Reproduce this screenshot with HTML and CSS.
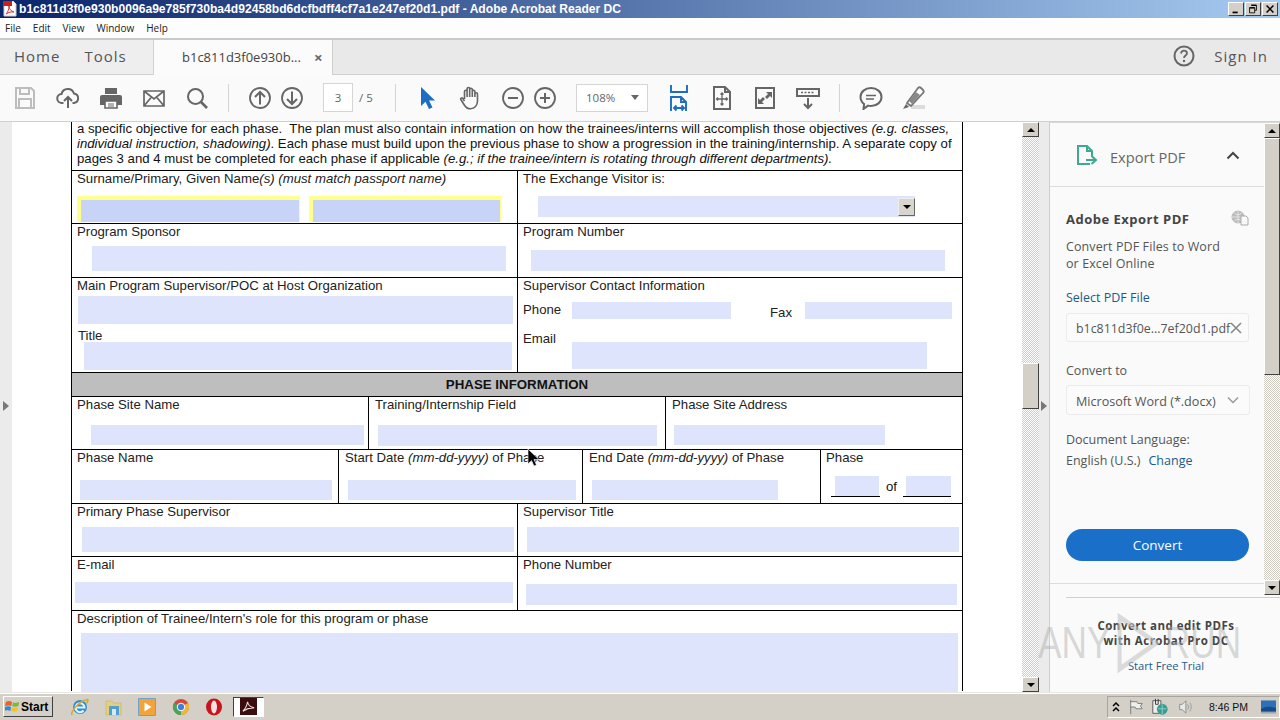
FILE: index.html
```html
<!DOCTYPE html>
<html lang="en">
<head>
<meta charset="utf-8">
<title>Adobe Acrobat Reader DC</title>
<link rel="stylesheet" href="styles.css">
</head>
<body>
<div class="app">
  <header class="titlebar">
    <svg class="title-icon" viewBox="0 0 14 16"><path d="M1 0h9l3 3v12H1z" fill="#fff" stroke="#c9c9c9"/><path d="M0 0h9v5H0z" fill="#c8201c"/><path d="M3 13c2-2 3-5 3-8 0 3 2 5 5 6-3-.3-5 0-8 2z" fill="none" stroke="#d2352e"/></svg>
    <span class="title-text">b1c811d3f0e930b0096a9e785f730ba4d92458bd6dcfbdff4cf7a1e247ef20d1.pdf - Adobe Acrobat Reader DC</span>
    <div class="win-buttons">
      <span class="win-btn"><svg viewBox="0 0 16 14"><path d="M4 10h6v2H4z" fill="#000"/></svg></span>
      <span class="win-btn"><svg viewBox="0 0 16 14"><path d="M6 2.5h6v6h-2M4 5.500h6v6H4z" fill="none" stroke="#000"/><path d="M6 2h6v1.500H6zM4 5h6v1.500H4z"/></svg></span>
      <span class="win-btn"><svg viewBox="0 0 16 14"><path d="M4 3l8 8M12 3l-8 8" stroke="#000" stroke-width="1.800"/></svg></span>
    </div>
  </header>
  <nav class="menubar"><span>File</span><span>Edit</span><span>View</span><span>Window</span><span>Help</span></nav>
  <div class="tabbar">
    <div class="home-tabs"><span>Home</span><span>Tools</span></div>
    <div class="doc-tab"><span class="doc-tab-name">b1c811d3f0e930b...</span><span class="doc-tab-x">×</span></div>
    <div class="tab-right">
      <svg class="help" viewBox="0 0 22 22"><circle cx="11" cy="11" r="9.500" fill="none" stroke="#666" stroke-width="2"/><path d="M8 8.500c.3-2 1.500-2.800 3-2.800 1.800 0 3 1.100 3 2.600 0 2.200-3 2.300-3 4.700" fill="none" stroke="#666" stroke-width="1.800"/><circle cx="11" cy="16" r="1.200" fill="#666"/></svg>
      <span class="signin">Sign In</span>
    </div>
  </div>
  <div class="toolbar">
    <svg class="ic" viewBox="0 0 24 24"><path d="M3 2h15l3 3v17H3z M7 2v6h9V2 M6 22v-9h12v9" fill="none" stroke="#bdbdbd" stroke-width="2"/></svg>
    <svg class="ic" viewBox="0 0 24 24"><path d="M7.500 17H6a4.500 4.500 0 0 1-.5-9A6.500 6.500 0 0 1 18 7.500 4.800 4.800 0 0 1 18 17h-1.500M12 22V11M8 15l4-4 4 4" fill="none" stroke="#666" stroke-width="2"/></svg>
    <svg class="ic" viewBox="0 0 24 24"><path d="M6 2h12v6H6z" fill="#666"/><path d="M3 9h18a2 2 0 0 1 2 2v8h-5v-3H6v3H1v-8a2 2 0 0 1 2-2z" fill="#666"/><path d="M6 15h12v7H6z" fill="#fff" stroke="#666" stroke-width="1.600"/><path d="M9 18h6M9 20h6" stroke="#666"/></svg>
    <svg class="ic" viewBox="0 0 24 24"><path d="M2 5h20v15H2zM2 5l10 8 10-8M2 20l7.500-9M22 20l-7.500-9" fill="none" stroke="#666" stroke-width="1.700"/></svg>
    <svg class="ic" viewBox="0 0 24 24"><circle cx="10.500" cy="10.500" r="7.500" fill="none" stroke="#666" stroke-width="2"/><path d="M16 16l6 6" stroke="#666" stroke-width="2.600"/></svg>
    <span class="tb-sep"></span>
    <div class="tb-pair">
      <svg class="ic" viewBox="0 0 24 24"><circle cx="12" cy="12" r="10" fill="none" stroke="#666" stroke-width="1.800"/><path d="M12 18.500V6M7 11l5-5 5 5" fill="none" stroke="#666" stroke-width="2"/></svg>
      <svg class="ic" viewBox="0 0 24 24"><circle cx="12" cy="12" r="10" fill="none" stroke="#666" stroke-width="1.800"/><path d="M12 5.500V18M7 13l5 5 5-5" fill="none" stroke="#666" stroke-width="2"/></svg>
    </div>
    <div class="pager"><span class="page-box">3</span><span class="page-of">/ 5</span></div>
    <span class="tb-sep"></span>
    <svg class="ic" viewBox="0 0 24 24"><path d="M6 1v19l4.500-4.300L14 23l3.500-1.600-3.400-7H20z" fill="#1b6ec2"/></svg>
    <svg class="ic" viewBox="0 0 24 24"><path d="M6.500 13V5.500a1.300 1.300 0 0 1 2.600 0V11M9.100 11V2.800a1.300 1.300 0 0 1 2.600 0V11M11.700 11V3.500a1.300 1.300 0 0 1 2.600 0V11M14.300 11V5.500a1.300 1.300 0 0 1 2.600 0V11M16.900 11V8a1.300 1.300 0 0 1 2.600 0v7c0 4.500-2.900 7.800-7 7.800-3 0-4.800-1.500-6.200-3.800l-3.500-5.500c-.6-1.100.9-2.100 1.900-1.200L6.500 15" fill="none" stroke="#666" stroke-width="1.600"/></svg>
    <div class="tb-pair">
      <svg class="ic" viewBox="0 0 24 24"><circle cx="12" cy="12" r="10" fill="none" stroke="#666" stroke-width="1.800"/><path d="M7 12h10" stroke="#666" stroke-width="2"/></svg>
      <svg class="ic" viewBox="0 0 24 24"><circle cx="12" cy="12" r="10" fill="none" stroke="#666" stroke-width="1.800"/><path d="M7 12h10M12 7v10" stroke="#666" stroke-width="2"/></svg>
    </div>
    <div class="zoom-box"><span>108%</span><i class="caret"></i></div>
    <svg class="ic tall" viewBox="0 0 24 28"><path d="M4 1v7h16V1M4 27V13h10l5 5v9M14 13v5h5M7 24h10M9.500 21.500L7 24l2.500 2.500M14.500 21.500L17 24l-2.500 2.500" fill="none" stroke="#1b6ec2" stroke-width="1.900"/></svg>
    <svg class="ic" viewBox="0 0 24 24"><path d="M4 1h11l5 5v17H4zM15 1v5h5" fill="none" stroke="#666" stroke-width="2"/><path d="M12 7v12M6.500 13h11M10.500 8.500L12 7l1.500 1.500M10.500 17.500L12 19l1.500-1.500M8 11.500L6.500 13 8 14.500M16 11.500l1.500 1.500-1.500 1.500" fill="none" stroke="#666" stroke-width="1.300"/></svg>
    <svg class="ic" viewBox="0 0 24 24"><path d="M3 2h18v20H3z" fill="none" stroke="#666" stroke-width="2"/><path d="M13 6h6v6l-2-2-3 3-2-2 3-3zM11 18H5v-6l2 2 3-3 2 2-3 3z" fill="#666"/></svg>
    <svg class="ic" viewBox="0 0 24 24"><path d="M1 3h22v7H1z" fill="none" stroke="#666" stroke-width="2"/><path d="M5 6.500h14" stroke="#666" stroke-width="1.600" stroke-dasharray="2 1.500"/><path d="M12 12v10M8 18l4 4 4-4" fill="none" stroke="#666" stroke-width="2"/></svg>
    <span class="tb-sep"></span>
    <svg class="ic" viewBox="0 0 24 24"><path d="M12 2c6 0 10.500 4 10.500 9S18 20 12 20c-1 0-2-.1-3-.4L4.500 23l.6-5C2.800 16.300 1.500 14 1.500 11 1.500 6 6 2 12 2z" fill="none" stroke="#666" stroke-width="2"/><path d="M7 9.500h10M7 13h8" stroke="#666" stroke-width="1.500"/></svg>
    <svg class="ic" viewBox="0 0 24 24"><path d="M9 23h14v-4H10z" fill="#dcdcdc"/><path d="M1 23l3-5 3 3z" fill="#666"/><path d="M5 17L16 2c1-1 2-1 3 0l2 2c1 1 1 2 0 3L9 20z" fill="#fff" stroke="#777" stroke-width="1.800"/><path d="M7 15l7-9 4 3-8 9z" fill="#888"/></svg>
  </div>

  <main class="workspace">
    <div class="gutter-left"><i class="tri-right"></i></div>
    <section class="doc">
      <div class="sheet">
        <p class="intro">a specific objective for each phase.&nbsp; The plan must also contain information on how the trainees/interns will accomplish those objectives <em>(e.g. classes,</em><br><em>individual instruction, shadowing)</em>. Each phase must build upon the previous phase to show a progression in the training/internship. A separate copy of<br>pages 3 and 4 must be completed for each phase if applicable <em>(e.g.; if the trainee/intern is rotating through different departments).</em></p>

        <div class="row r1">
          <div class="cell half">
            <div class="label">Surname/Primary, Given Name<em>(s) (must match passport name)</em></div>
            <div class="name-fields"><div class="focus-field f-sur"><div class="focus-inner"></div></div><div class="focus-field f-given"><div class="focus-inner"></div></div></div>
          </div>
          <div class="cell half line">
            <div class="label">The Exchange Visitor is:</div>
            <div class="combo"><div class="combo-btn"><i class="tri-down"></i></div></div>
          </div>
        </div>

        <div class="row r2">
          <div class="cell half"><div class="label">Program Sponsor</div><div class="field f-sponsor"></div></div>
          <div class="cell half line"><div class="label">Program Number</div><div class="field f-number"></div></div>
        </div>

        <div class="row r3">
          <div class="cell half">
            <div class="label">Main Program Supervisor/POC at Host Organization</div>
            <div class="field f-main"></div>
            <div class="label title-label">Title</div>
            <div class="field f-title"></div>
          </div>
          <div class="cell half line">
            <div class="label">Supervisor Contact Information</div>
            <div class="contact c-phone">
              <span class="label contact-label">Phone</span><div class="field f-phone"></div>
              <span class="label fax-label">Fax</span><div class="field f-fax"></div>
            </div>
            <div class="contact c-email">
              <span class="label contact-label">Email</span><div class="field f-email"></div>
            </div>
          </div>
        </div>

        <div class="band">PHASE INFORMATION</div>

        <div class="row r4">
          <div class="cell c-site"><div class="label">Phase Site Name</div><div class="field f-site"></div></div>
          <div class="cell c-train line"><div class="label">Training/Internship Field</div><div class="field f-train"></div></div>
          <div class="cell c-addr line"><div class="label">Phase Site Address</div><div class="field f-addr"></div></div>
        </div>

        <div class="row r5">
          <div class="cell c-pname"><div class="label">Phase Name</div><div class="field f-pname"></div></div>
          <div class="cell c-start line"><div class="label">Start Date <em>(mm-dd-yyyy)</em> of Phase</div><div class="field f-start"></div></div>
          <div class="cell c-end line"><div class="label">End Date <em>(mm-dd-yyyy)</em> of Phase</div><div class="field f-end"></div></div>
          <div class="cell c-phase line">
            <div class="label">Phase</div>
            <div class="phase-of"><div class="u-field"><div class="field f-pa"></div></div><span class="of">of</span><div class="u-field"><div class="field f-pb"></div></div></div>
          </div>
        </div>

        <div class="row r6">
          <div class="cell half"><div class="label">Primary Phase Supervisor</div><div class="field f-primary"></div></div>
          <div class="cell half line"><div class="label">Supervisor Title</div><div class="field f-suptitle"></div></div>
        </div>

        <div class="row r7">
          <div class="cell half"><div class="label">E-mail</div><div class="field f-mail"></div></div>
          <div class="cell half line"><div class="label">Phone Number</div><div class="field f-tel"></div></div>
        </div>

        <div class="row r8">
          <div class="cell full"><div class="label">Description of Trainee/Intern's role for this program or phase</div><div class="field f-desc"></div></div>
        </div>
      </div>
      <svg class="cursor" viewBox="0 0 12 18"><path d="M1 0v15l3.500-3.500L7 17l2.500-1L7 10.500h5z" fill="#000" stroke="#fff" stroke-width=".6"/></svg>
    </section>
    <div class="vscroll doc-scroll">
      <div class="sb-btn"><i class="tri-up"></i></div>
      <div class="sb-thumb doc-thumb"></div>
      <div class="sb-track"></div>
      <div class="sb-btn"><i class="tri-down"></i></div>
    </div>
    <div class="gutter-mid"><i class="tri-right"></i></div>

    <aside class="panel">
      <div class="panel-top">
        <div class="panel-body">
          <div class="export-head">
            <svg class="export-icon" viewBox="0 0 23 22"><path d="M14 19H2V1h9l5 5v5M11 1v5h5" fill="none" stroke="#3fa893" stroke-width="2"/><path d="M10 15h9M15.500 11l4.500 4-4.500 4" fill="none" stroke="#3fa893" stroke-width="2"/></svg>
            <span class="export-title">Export PDF</span>
            <svg class="chev" viewBox="0 0 14 9"><path d="M1.500 7.500L7 2l5.500 5.500" fill="none" stroke="#444" stroke-width="2"/></svg>
          </div>
          <div class="export-body">
            <div class="ae-head"><strong>Adobe Export PDF</strong><svg class="globe" viewBox="0 0 18 16"><circle cx="7" cy="7" r="6.500" fill="#bbb"/><path d="M7 .5v13M1 7h12M3 2.500c2 3 6 3 8 0M3 11.500c2-3 6-3 8 0" stroke="#eee" fill="none" stroke-width=".8"/><path d="M10 6h5l2 2v7h-7z" fill="#fafafa" stroke="#aaa"/></svg></div>
            <p class="pt desc">Convert PDF Files to Word<br>or Excel Online</p>
            <p class="pt link sel">Select PDF File</p>
            <div class="input-box"><span>b1c811d3f0e...7ef20d1.pdf</span><svg class="clear" viewBox="0 0 12 12"><path d="M1 1l10 10M11 1L1 11" stroke="#888" stroke-width="1.600"/></svg></div>
            <p class="pt conv">Convert to</p>
            <div class="input-box select-box"><span>Microsoft Word (*.docx)</span><svg class="sel-chev" viewBox="0 0 12 8"><path d="M1 1.500l5 5 5-5" fill="none" stroke="#999" stroke-width="1.500"/></svg></div>
            <p class="pt lang">Document Language:</p>
            <p class="pt lang2">English (U.S.)<a class="link change">Change</a></p>
            <div class="convert-btn">Convert</div>
          </div>
        </div>
        <div class="vscroll panel-scroll">
          <div class="sb-btn"><i class="tri-up"></i></div>
          <div class="sb-thumb panel-thumb"></div>
          <div class="sb-track"></div>
          <div class="sb-btn"><i class="tri-down"></i></div>
        </div>
      </div>
      <div class="promo">
        <p class="promo-title">Convert and edit PDFs<br>with Acrobat Pro DC</p>
        <p class="promo-link">Start Free Trial</p>
      </div>
      <div class="watermark"><span>ANY</span><svg viewBox="0 0 60 60"><path d="M8 4l46 26L8 56z" fill="none" stroke="#c4c4c4" stroke-width="5" opacity=".6"/></svg><span>RUN</span></div>
    </aside>
  </main>

  <footer class="taskbar">
    <div class="start">
      <svg viewBox="0 0 18 16"><path d="M1 3c2-1.500 4-1.500 7 0L7 7.500C5 6.500 3 6.500 0 7.500z" fill="#e8632c"/><path d="M9 3.200c2 1 4 1 7-.2l-1 4.500c-2.500 1-4.500 1-7 0z" fill="#7db93a"/><path d="M0 8.500c2.500-1 4.500-1 6.800 0L6 13c-2-1-4-1-7 0z" fill="#2f88d8"/><path d="M7.800 8.500c2.500 1 4.500 1 7 0l-1 4.500c-2.500 1-4.500 1-7 0z" fill="#f2c230"/></svg>
      <span>Start</span>
    </div>
    <div class="quick">
      <svg class="tk" viewBox="0 0 18 18"><circle cx="9" cy="9" r="7" fill="#2f8fd2"/><path d="M5 9.500h8.500a4.500 4.500 0 1 0-1 3" fill="none" stroke="#e7f4fc" stroke-width="2"/><path d="M1 17c-1.500-3 6-13 15-15.500 2.500-.3-.5 4-.5 4" fill="none" stroke="#dba92e" stroke-width="1.600"/></svg>
      <svg class="tk" viewBox="0 0 18 18"><path d="M1 3h6l1 2h8v12H1z" fill="#e3cf7c" stroke="#c9b25e" stroke-width=".6"/><path d="M4 8h10v9H4z" fill="#4f9fd2"/><path d="M7 11h4v6H7z" fill="#d9e9f2"/></svg>
      <svg class="tk" viewBox="0 0 18 18"><path d="M.5.5h17v17H.5z" fill="#f2a33a" stroke="#6fa3cf"/><path d="M6.500 4.500l7 4.500-7 4.500z" fill="#fff"/></svg>
      <svg class="tk" viewBox="0 0 18 18"><circle cx="9" cy="9" r="8" fill="#d8483a"/><path d="M9 9L16 5A8 8 0 0 1 9 17z" fill="#e9b93a"/><path d="M9 9V17A8 8 0 0 1 2 5z" fill="#4aa356"/><circle cx="9" cy="9" r="3.800" fill="#3f7fd9" stroke="#fff"/></svg>
      <svg class="tk" viewBox="0 0 18 18"><ellipse cx="9" cy="9" rx="8" ry="8.500" fill="#c8141c"/><ellipse cx="9" cy="9" rx="3" ry="6.500" fill="#f5e4e4"/></svg>
      <div class="tk-active"><svg viewBox="0 0 18 18"><path d="M0 0h18v18H0z" fill="#3a0c0e"/><path d="M3 14c3-3 4.500-6 5-10 .5 3.500 2.500 5.500 7 6.500-4-.3-7.500.6-12 3.500z" fill="none" stroke="#f1d6d6" stroke-width="1.200"/></svg></div>
    </div>
    <div class="tray">
      <svg class="tray-ic chevs" viewBox="0 0 10 12"><path d="M2 5l3-3 3 3M2 10l3-3 3 3" fill="none" stroke="#000" stroke-width="1.500"/></svg>
      <svg class="tray-ic flag" viewBox="0 0 18 18"><path d="M3 1v16M3 3h7l1 2h5l-2 3 2 3H9l-1-2H3" fill="#eee" stroke="#777"/></svg>
      <svg class="tray-ic net" viewBox="0 0 20 20"><path d="M2 3h9v14H2z" fill="#eee" stroke="#555"/><path d="M5 1v6h3V1" fill="none" stroke="#333"/><circle cx="12.500" cy="12.500" r="6" fill="#3d9d8c"/><path d="M8 12h9M12.500 7v11" stroke="#8fd0d8"/></svg>
      <svg class="tray-ic vol" viewBox="0 0 18 18"><path d="M3 6h3l4-4v14l-4-4H3z" fill="#e8e8e8" stroke="#888"/><path d="M12 6c1.200 1.800 1.200 4.200 0 6M14.500 4c2 3 2 7 0 10" fill="none" stroke="#999"/></svg>
      <span class="clock">8:46 PM</span>
      <svg class="tray-ic desk" viewBox="0 0 16 14"><path d="M0 0h16v12H0z" fill="#2f6fb8"/><path d="M0 9c5-3 10-3 16-1v4H0z" fill="#174a8a"/><path d="M0 12h16v2H0z" fill="#9aa6b2"/></svg>
    </div>
  </footer>
</div>
</body>
</html>
```
FILE: styles.css
```css
* { box-sizing: border-box; }
html, body { margin: 0; padding: 0; width: 1280px; height: 720px; overflow: hidden; }
body { font-family: "Liberation Sans", Arial, sans-serif; background: #fff; color: #111; }
p { margin: 0; }
.app { display: flex; flex-direction: column; width: 1280px; height: 720px; }

/* title bar */
.titlebar { display: flex; align-items: center; height: 18px; flex: none; background: linear-gradient(90deg, #0a246a 0%, #a6caf0 100%); padding-left: 3px; }
.title-icon { width: 14px; height: 16px; flex: none; }
.title-text { margin-left: 2px; color: #fff; font: bold 12.100px/18px "Liberation Sans", sans-serif; white-space: nowrap; }
.win-buttons { margin-left: auto; margin-right: 2px; display: flex; gap: 1px; }
.win-btn { width: 16px; height: 14px; background: #d4d0c8; border: 1px solid; border-color: #fff #404040 #404040 #fff; display: block; }
.win-btn svg { display: block; width: 14px; height: 12px; }

/* menu */
.menubar { display: flex; height: 20px; flex: none; align-items: center; background: #fdfdfd; padding-left: 5px; gap: 12px; font: 10px/20px "Open Sans", sans-serif; color: #222; }

/* tab bar */
.tabbar { display: flex; height: 37px; flex: none; background: #e9e9e9; border-top: 2px solid #c9c9c9; border-bottom: 1px solid #d0d0d0; }
.home-tabs { width: 154px; display: flex; gap: 24px; padding: 0 0 3px 14px; align-items: center; background: #eeeeee; border-right: 1px solid #d0d0d0; font: 15px "Open Sans", sans-serif; letter-spacing: 1px; color: #555; }
.doc-tab { width: 179px; height: 36px; display: flex; align-items: center; padding: 0 0 3px 28px; background: #fbfbfb; border-right: 1px solid #d0d0d0; font: 13px "Open Sans", sans-serif; color: #444; }
.doc-tab-x { margin-left: 13px; font-size: 15px; font-weight: 700; color: #666; }
.tab-right { margin-left: auto; display: flex; align-items: center; padding: 0 12px 3px 0; }
.help { width: 22px; height: 22px; margin-right: 19px; }
.signin { font: 15px "Open Sans", sans-serif; letter-spacing: 1px; color: #555; }

/* toolbar */
.toolbar { display: flex; align-items: center; gap: 19px; height: 47px; flex: none; background: #fafafa; border-bottom: 1px solid #cfcfcf; padding: 0 0 1px 13px; }
.ic { width: 24px; height: 24px; flex: none; display: block; }
.ic.tall { height: 28px; }
.tb-sep { width: 1px; height: 28px; background: #d4d4d4; flex: none; }
.tb-pair { display: flex; gap: 8px; }
.pager { display: flex; align-items: center; gap: 6px; width: 53px; flex: none; font: 11.500px "Open Sans", sans-serif; color: #666; white-space: nowrap; }
.page-box { width: 30px; height: 29px; flex: none; border: 1px solid #d5d5d5; background: #fff; text-align: center; line-height: 27px; }
.zoom-box { width: 72px; height: 28px; flex: none; display: flex; align-items: center; justify-content: space-between; padding: 0 8px 0 9px; border: 1px solid #d5d5d5; background: #fff; font: 11.500px "Open Sans", sans-serif; color: #666; }
.caret { width: 0; height: 0; border: 4px solid transparent; border-top: 5px solid #666; border-bottom: 0; }

/* workspace */
.workspace { display: flex; height: 570px; flex: none; overflow: hidden; }
.gutter-left { width: 12px; flex: none; background: #ebebeb; display: flex; align-items: center; padding: 0 0 0 3px; }
.gutter-left .tri-right, .gutter-mid .tri-right { margin-top: -2px; }
.tri-right { display: block; width: 0; height: 0; border: 5px solid transparent; border-left: 6px solid #777; border-right: 0; }
.tri-up { display: block; width: 0; height: 0; border: 4px solid transparent; border-bottom: 4px solid #000; border-top: 0; }
.tri-down { display: block; width: 0; height: 0; border: 4px solid transparent; border-top: 4px solid #000; border-bottom: 0; }
.doc { width: 1010px; flex: none; background: #fff; position: relative; overflow: hidden; padding-left: 59px; }
.sheet { width: 892px; height: 570px; border-left: 1px solid #000; border-right: 1px solid #000; }
.cursor { position: absolute; left: 515px; top: 327px; width: 12px; height: 18px; }

.intro { height: 48px; padding-left: 5px; margin-top: -1px; margin-bottom: 1px; font-size: 13.200px; line-height: 15px; white-space: nowrap; color: #111; }
.row { display: flex; border-top: 1px solid #000; }
.r1 { height: 53px; }
.r2 { height: 54px; }
.r3 { height: 95px; }
.r4 { height: 53px; }
.r5 { height: 54px; }
.r6 { height: 53px; }
.r7 { height: 54px; }
.r8 { height: 82px; }
.cell { flex: none; height: 100%; }
.line { border-left: 1px solid #000; }
.half { width: 445px; }
.full { width: 890px; }
.c-site { width: 296px; }
.c-train { width: 297px; }
.c-addr { width: 297px; }
.c-pname { width: 266px; }
.c-start { width: 244px; }
.c-end { width: 238px; }
.c-phase { width: 142px; }
.label { font-size: 13.200px; line-height: 15px; height: 15px; padding-left: 5px; white-space: nowrap; color: #222; }
.c-train > .label, .c-addr > .label, .c-start > .label, .c-end > .label { padding-left: 6px; }
.field { background: #dde4fc; flex: none; }

.name-fields { display: flex; margin: 10px 0 0 5px; gap: 9px; }
.focus-field { height: 26px; background: #ffff8c; padding: 4px 1px 0 4px; }
.focus-inner { height: 22px; background: #c7d3f7; }
.f-sur { width: 223px; }
.f-given { width: 192px; }
.combo { width: 377px; height: 21px; margin: 10px 0 0 20px; background: #dde4fc; display: flex; justify-content: flex-end; align-items: center; }
.combo-btn { width: 17px; height: 18px; background: #d8d5ce; border: 1px solid; border-color: #eee #666 #666 #eee; display: flex; align-items: center; justify-content: center; }

.f-sponsor { width: 414px; height: 25px; margin: 7px 0 0 20px; }
.f-number { width: 414px; height: 21px; margin: 11px 0 0 13px; }
.f-main { width: 435px; height: 28px; margin: 3px 0 0 6px; }
.title-label { margin-top: 4px; padding-left: 6px; }
.f-title { width: 428px; height: 28px; margin: -1px 0 0 12px; }
.contact { display: flex; align-items: flex-start; }
.c-phone { margin-top: 9px; height: 17px; }
.c-email { margin-top: 12px; }
.contact-label { width: 54px; flex: none; }
.f-phone { width: 159px; height: 17px; }
.fax-label { margin-left: 34px; margin-top: 3px; width: 40px; flex: none; padding-left: 5px; }
.f-fax { width: 147px; height: 17px; margin-left: 0; }
.f-email { width: 355px; height: 27px; margin-top: 11px; }
.band { height: 24px; background: #bebebe; border-top: 1px solid #000; font-size: 13.300px; font-weight: 700; line-height: 24px; text-align: center; color: #111; }

.f-site { width: 273px; height: 20px; margin: 13px 0 0 19px; }
.f-train { width: 279px; height: 21px; margin: 13px 0 0 9px; }
.f-addr { width: 211px; height: 20px; margin: 13px 0 0 8px; }
.f-pname { width: 252px; height: 20px; margin: 15px 0 0 8px; }
.f-start { width: 228px; height: 20px; margin: 15px 0 0 9px; }
.f-end { width: 186px; height: 20px; margin: 15px 0 0 9px; }
.phase-of { display: flex; align-items: flex-start; margin: 11px 0 0 10px; }
.u-field { width: 49px; height: 21px; border-bottom: 1px solid #000; display: flex; justify-content: flex-end; }
.u-field + .of + .u-field { width: 48px; padding-right: 0; justify-content: flex-start; }
.f-pa { width: 44px; height: 20px; margin-right: 1px; }
.f-pb { width: 45px; height: 20px; margin-left: 3px; }
.of { width: 23px; font-size: 13.200px; line-height: 15px; padding-top: 3px; text-align: center; }
.f-primary { width: 432px; height: 25px; margin: 8px 0 0 10px; }
.f-suptitle { width: 432px; height: 25px; margin: 8px 0 0 9px; }
.f-mail { width: 438px; height: 21px; margin: 10px 0 0 3px; }
.f-tel { width: 431px; height: 21px; margin: 12px 0 0 8px; }
.f-desc { width: 877px; height: 70px; margin: 7px 0 0 9px; }

/* scrollbars */
.vscroll { display: flex; flex-direction: column; flex: none; background-color: #fff; background-image: conic-gradient(#cfccc4 25%, #fff 0 50%, #cfccc4 0 75%, #fff 0); background-size: 2px 2px; }
.doc-scroll { width: 17px; height: 570px; }
.panel-scroll { width: 16px; height: 472px; }
.sb-btn { height: 15px; flex: none; background: #d4d0c8; border: 1px solid; border-color: #fff #404040 #404040 #fff; display: flex; align-items: center; justify-content: center; }
.sb-thumb { flex: none; background: #d4d0c8; border: 1px solid; border-color: #fff #404040 #404040 #fff; }
.doc-thumb { height: 46px; margin-top: 226px; }
.panel-thumb { height: 237px; }
.sb-track { flex: 1; }

.gutter-mid { width: 10px; flex: none; background: #ebebeb; display: flex; align-items: center; padding-left: 2px; }

/* side panel */
.panel { width: 231px; flex: none; background: #fafafa; border-left: 1px solid #cfcfcf; border-top: 1px solid #d8d8d8; position: relative; font-family: "Open Sans", sans-serif; }
.panel-top { display: flex; height: 474px; }
.panel-body { width: 214px; flex: none; }
.export-head { height: 64px; display: flex; align-items: center; padding: 4px 0 0 26px; border-bottom: 1px solid #dcdcdc; }
.export-icon { width: 23px; height: 22px; flex: none; margin-top: -1px; }
.export-title { margin-left: 11px; font-size: 14.600px; color: #666; }
.chev { width: 14px; height: 9px; margin: -3px 0 0 41px; }
.export-body { height: 397px; padding: 22px 15px 0 16px; border-bottom: 1px solid #dcdcdc; color: #555; }
.ae-head { display: flex; justify-content: space-between; align-items: center; height: 20px; font-size: 13px; letter-spacing: .5px; color: #444; }
.globe { width: 18px; height: 16px; margin-top: -3px; }
.pt { font-size: 12.500px; line-height: 17px; white-space: nowrap; }
.desc { margin-top: 9px; letter-spacing: .1px; }
.link { color: #1b5a8c; }
.sel { margin-top: 17px; }
.input-box { height: 29px; width: 183px; margin-top: 7px; padding-left: 9px; border: 1px solid #ebebeb; border-radius: 3px; background: #fbfbfb; display: flex; align-items: center; justify-content: space-between; font-size: 12.400px; color: #555; white-space: nowrap; }
.input-box span { margin-top: 1px; }
.clear { width: 12px; height: 12px; flex: none; margin-right: 6px; }
.conv { margin-top: 20px; }
.select-box { width: 184px; height: 30px; margin-top: 6px; font-size: 12.600px; }
.select-box span { margin-top: 2px; }
.sel-chev { width: 12px; height: 8px; margin-right: 10px; flex: none; }
.lang { margin-top: 16px; }
.lang2 { margin-top: 4px; }
.change { margin-left: 8px; }
.convert-btn { width: 183px; height: 32px; margin-top: 60px; background: #1a70c8; border-radius: 16px; color: #fff; font-size: 13.500px; line-height: 32px; text-align: center; }
.promo { margin-left: 16px; margin-top: 0; height: 95px; border-top: 1px solid #cfcfcf; text-align: center; padding: 20px 14px 0 0; background: #fafafa; }
.promo-title { font-size: 11.500px; font-weight: 700; line-height: 15px; letter-spacing: .5px; color: #444; }
.promo-link { margin-top: 10px; font-size: 11.200px; line-height: 15px; color: #1b5a8c; }
.watermark { position: absolute; left: -12px; top: 490px; display: flex; align-items: center; gap: 0; font: 44px/50px "Liberation Sans", sans-serif; color: rgba(170, 170, 170, .45); pointer-events: none; transform: scaleX(.8); transform-origin: left center; white-space: nowrap; }
.watermark svg { width: 60px; height: 60px; margin: 0 4px; }

/* taskbar */
.taskbar { height: 28px; flex: none; display: flex; align-items: center; background: #d4d0c8; border-top: 1px solid #e8e6e0; box-shadow: inset 0 1px 0 #fff; padding-left: 3px; }
.start { width: 50px; height: 21px; display: flex; align-items: center; gap: 0; padding-left: 1px; border: 1px solid; border-color: #fff #404040 #404040 #fff; background: #d4d0c8; font: bold 12px "Liberation Sans", sans-serif; color: #000; }
.start svg { width: 16px; height: 15px; flex: none; }
.quick { display: flex; align-items: center; margin-left: 18px; gap: 15.500px; }
.tk { width: 18px; height: 18px; flex: none; }
.tk-active { width: 31px; height: 20px; margin-left: -6px; display: flex; align-items: center; justify-content: center; background: #fff; border: 1px solid; border-color: #404040 #fff #fff #404040; }
.tk-active svg { width: 17px; height: 17px; }
.tray { margin-left: auto; height: 22px; width: 173px; display: flex; align-items: center; padding-left: 3px; border: 1px solid; border-color: #a8a59e #fff #fff #a8a59e; font: 10.500px "Liberation Sans", sans-serif; color: #111; }
.tray-ic { flex: none; width: 16px; height: 16px; }
.chevs { width: 10px; height: 12px; }
.flag { margin-left: 7px; }
.net { margin-left: 7px; width: 18px; height: 18px; }
.vol { margin-left: 8px; }
.clock { margin-left: 16px; white-space: nowrap; }
.desk { margin-left: 13px; width: 15px; height: 14px; }
```
